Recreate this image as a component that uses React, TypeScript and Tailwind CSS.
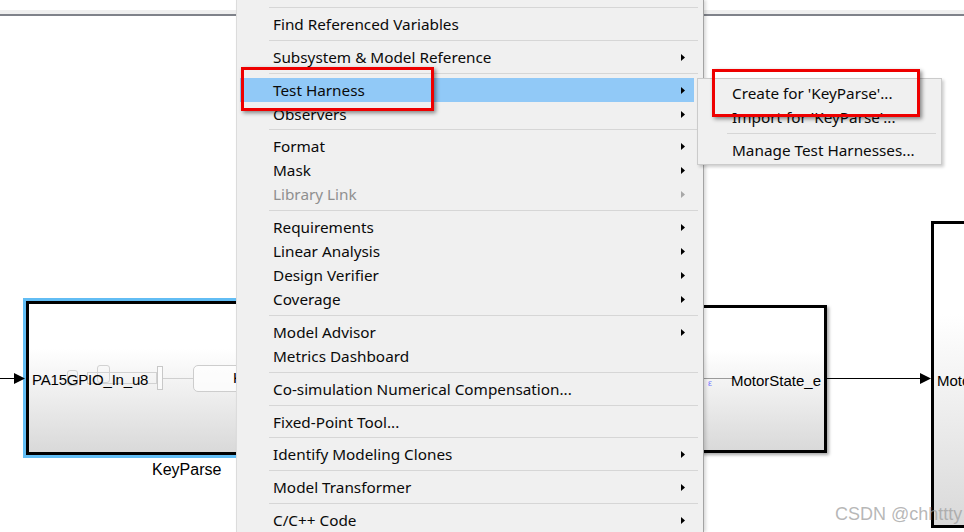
import React from 'react';

type Item = { sep?: boolean; label?: string; sub?: boolean; active?: boolean; disabled?: boolean };

const menuItems: Item[] = [
  { sep: true },
  { label: 'Find Referenced Variables' },
  { sep: true },
  { label: 'Subsystem & Model Reference', sub: true },
  { sep: true },
  { label: 'Test Harness', sub: true, active: true },
  { label: 'Observers', sub: true },
  { sep: true },
  { label: 'Format', sub: true },
  { label: 'Mask', sub: true },
  { label: 'Library Link', sub: true, disabled: true },
  { sep: true },
  { label: 'Requirements', sub: true },
  { label: 'Linear Analysis', sub: true },
  { label: 'Design Verifier', sub: true },
  { label: 'Coverage', sub: true },
  { sep: true },
  { label: 'Model Advisor', sub: true },
  { label: 'Metrics Dashboard' },
  { sep: true },
  { label: 'Co-simulation Numerical Compensation...' },
  { sep: true },
  { label: 'Fixed-Point Tool...' },
  { sep: true },
  { label: 'Identify Modeling Clones', sub: true },
  { sep: true },
  { label: 'Model Transformer', sub: true },
  { sep: true },
  { label: 'C/C++ Code', sub: true },
];

const Arrow = ({ gray }: { gray?: boolean }) => (
  <svg width="4" height="7" viewBox="0 0 4 7" className="shrink-0">
    <polygon points="0,0 4,3.5 0,7" fill={gray ? '#a8a8a8' : '#000'} />
  </svg>
);

const Sep = ({ left, right }: { left: string; right: string }) => (
  <div className="h-[9px] flex items-center">
    <div className={`h-px flex-1 bg-[#d6d6d6] ${left} ${right}`} />
  </div>
);

const Row = ({ item }: { item: Item }) => (
  <div
    className={`h-6 ml-[3px] mr-[9px] pl-[33px] pr-[9px] pt-px flex items-center justify-between ${
      item.active ? 'bg-[#91c9f7]' : ''
    }`}
  >
    <span className={item.disabled ? 'text-[#8f8f8f]' : 'text-[#0a0a0a]'}>{item.label}</span>
    {item.sub && <Arrow gray={item.disabled} />}
  </div>
);

const SignalArrow = () => (
  <svg width="11" height="11" viewBox="0 0 11 11" className="block">
    <polygon points="0,0 11,5.5 0,11" fill="#000" />
  </svg>
);

const blockBg = 'bg-[linear-gradient(to_bottom,#ffffff_0%,#ffffff_30%,#d9d9d9_100%)]';

export default function App() {
  return (
    <div className="relative w-[964px] h-[532px] overflow-hidden bg-white font-['Liberation_Sans',Arial,sans-serif]">
      {/* toolbar edge */}
      <div className="h-[10px] bg-white" />
      <div className="h-[4px] bg-[#efefef]" />
      <div className="h-[2px] bg-[#7f828a]" />

      {/* KeyParse block (selected) */}
      <div className="absolute left-[23px] top-[298px] w-[330px] h-[160px] border-[3px] border-[#62bdf4]">
        <div className={`relative w-full h-full border-[3px] border-black ${blockBg}`}>
          {/* faint inner content */}
          <div className="absolute left-[38px] top-[66px] w-[11px] h-[16px] rounded-[3px] border border-[#d2d2d2]" />
          <div className="absolute left-[68px] top-[61px] w-[13px] h-[18px] rounded-[3px] border border-[#d2d2d2]" />
          <div className="absolute left-[58px] top-[68px] w-[70px] h-[12px] border border-[#d2d2d2]" />
          <div className="absolute left-[128px] top-[62px] w-[6px] h-[24px] border border-[#c8c8c8] bg-white/60" />
          <div className="absolute left-[134px] top-[74px] w-[30px] h-px bg-[#cfcfcf]" />
          <div className="absolute left-[164px] top-[61px] w-[140px] h-[27px] rounded-[5px] border border-[#cdcdcd] bg-white/70 flex items-center pl-[39px] text-[15px] text-black">
            K
          </div>
          <div className="absolute left-[3px] top-[67px] text-[15px] text-black leading-[18px] tracking-[-0.2px]">
            PA15GPIO_In_u8
          </div>
        </div>
      </div>
      <div className="absolute left-[152px] top-[460px] text-[16px] leading-[20px] text-black">KeyParse</div>

      {/* input signal */}
      <div className="absolute left-0 top-[378px] w-[15px] h-px bg-black" />
      <div className="absolute left-[14px] top-[373px]">
        <SignalArrow />
      </div>

      {/* middle block */}
      <div
        className={`absolute left-[560px] top-[305px] w-[267px] h-[148px] border-[3px] border-black shadow-[2px_2px_3px_rgba(0,0,0,0.35)] ${blockBg}`}
      >
        <div className="absolute left-[139px] top-[70px] w-[32px] h-px bg-[#9a9a9a]" />
        <div className="absolute left-[145px] top-[70px] text-[9px] leading-[10px] text-[#7b7bff]">ε</div>
        <div className="absolute right-[3px] top-[64px] text-[15px] leading-[18px] text-black">MotorState_e</div>
      </div>

      {/* output signal */}
      <div className="absolute left-[827px] top-[378px] w-[95px] h-px bg-black" />
      <div className="absolute left-[920px] top-[373px]">
        <SignalArrow />
      </div>

      {/* right block */}
      <div className={`absolute left-[931px] top-[221px] w-[80px] h-[307px] border-[3px] border-black ${blockBg}`}>
        <div className="absolute left-[3px] top-[148px] text-[15px] leading-[18px] text-black whitespace-nowrap">
          Moto
        </div>
      </div>

      {/* watermark */}
      <div className="absolute left-[835px] top-[503px] text-[18px] leading-[22px] text-[rgba(160,160,160,0.75)]">
        CSDN @chhttty
      </div>

      {/* context menu */}
      <div className="absolute left-[236px] top-0 w-[468px] h-[532px] bg-[#f0f0f0] border-l border-[#dcdcdc] border-r border-r-[#a3a3a3] shadow-[2px_0_3px_rgba(0,0,0,0.15)] pt-[3px] flex flex-col font-['Noto_Sans',sans-serif] text-[15.3px]">
        {menuItems.map((it, i) =>
          it.sep ? <Sep key={i} left="ml-[32px]" right="mr-[5px]" /> : <Row key={i} item={it} />
        )}
      </div>

      {/* submenu */}
      <div className="absolute left-[697px] top-[78px] w-[245px] h-[87px] bg-[#f0f0f0] border border-[#cbcbcb] shadow-[2px_2px_3px_rgba(0,0,0,0.2)] pt-[2px] flex flex-col font-['Noto_Sans',sans-serif] text-[15.3px] text-[#0a0a0a]">
        <div className="h-6 pl-[34px] pt-px flex items-center">Create for 'KeyParse'...</div>
        <div className="h-6 pl-[34px] pt-px flex items-center">Import for 'KeyParse'...</div>
        <Sep left="ml-[29px]" right="mr-[5px]" />
        <div className="h-6 pl-[34px] pt-px flex items-center">Manage Test Harnesses...</div>
      </div>

      {/* annotation boxes */}
      <div className="absolute left-[241px] top-[67px] w-[193px] h-[44px] border-[3px] border-[#ee0000] shadow-[2px_2px_4px_rgba(0,0,0,0.45)]" />
      <div className="absolute left-[712px] top-[69px] w-[208px] h-[48px] border-[3px] border-[#ee0000] shadow-[2px_2px_4px_rgba(0,0,0,0.45)]" />
    </div>
  );
}
